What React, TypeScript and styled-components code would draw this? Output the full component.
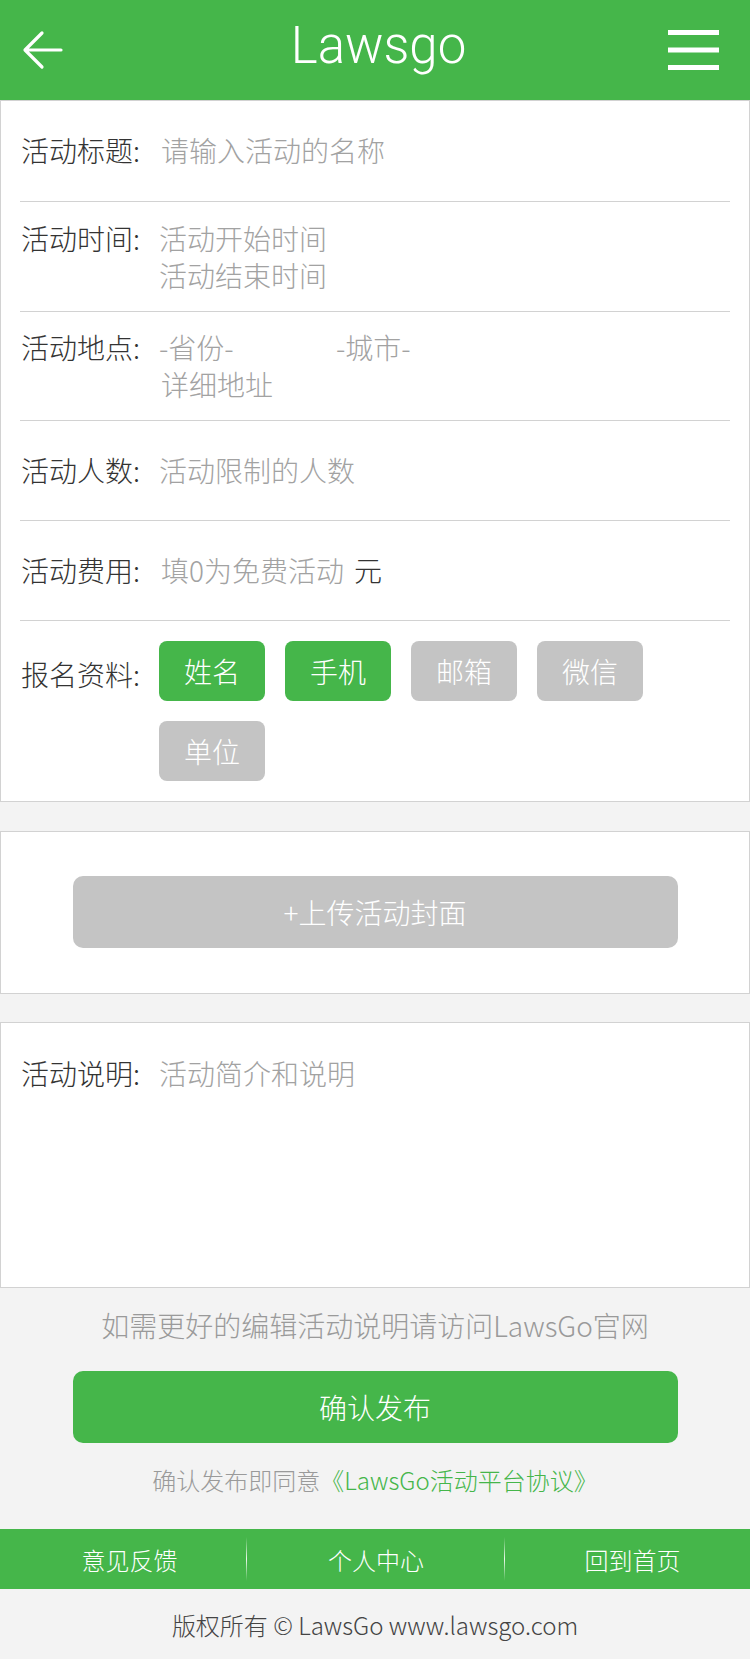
import React from 'react';
import styled, { createGlobalStyle } from 'styled-components';

// palette
const GREEN = '#45b64a';
const GREY_BTN = '#c4c4c4';
const LINE = '#d2d2d2';

const GlobalStyle = createGlobalStyle`
  html, body {
    margin: 0;
    padding: 0;
    background: #f3f3f3;
  }
  body {
    font-family: "Noto Sans CJK SC", "Noto Sans", sans-serif;
    font-weight: 300;
    color: #333;
  }
  * {
    box-sizing: border-box;
  }
`;

const Page = styled.div`
  width: 750px;
  min-height: 1659px;
  background: #f3f3f3;
  display: flex;
  flex-direction: column;
`;

// header bar
const Header = styled.header`
  height: 100px;
  background: ${GREEN};
  display: grid;
  grid-template-columns: 1fr auto 1fr;
  align-items: center;
  padding: 0 31px 0 22px;
`;

const Title = styled.h1`
  margin: 0 0 10px 16px;
  font-family: Roboto, "Liberation Sans", sans-serif;
  font-weight: 300;
  font-size: 51px;
  line-height: 1;
  color: #fff;
`;

const IconButton = styled.span<{ $end?: boolean }>`
  display: flex;
  justify-self: ${(p) => (p.$end ? 'end' : 'start')};
`;

// cards and rows
const Card = styled.section<{ $pad?: string; $minH?: number }>`
  background: #fff;
  border: 1px solid ${LINE};
  padding: ${(p) => p.$pad || '0 19px'};
  min-height: ${(p) => (p.$minH ? `${p.$minH}px` : 'auto')};
`;

const Gap = styled.div<{ $h: number }>`
  height: ${(p) => p.$h}px;
`;

const Row = styled.div<{ $pad: string; $last?: boolean }>`
  display: flex;
  align-items: flex-start;
  padding: ${(p) => p.$pad};
  border-bottom: ${(p) => (p.$last ? 'none' : `1px solid ${LINE}`)};
  font-size: 28px;
  line-height: 37px;
`;

const Label = styled.span`
  width: 139px;
  flex-shrink: 0;
  color: #333;
  padding-left: 1px;
`;

const Value = styled.div`
  display: flex;
  flex-direction: column;
  color: #a2a2a2;
`;

const Line = styled.div<{ $indent?: number }>`
  display: flex;
  padding-left: ${(p) => p.$indent || 0}px;
`;

const Select = styled.span`
  width: 177px;
`;

const Unit = styled.span`
  color: #333;
  margin-left: 10px;
`;

const Tags = styled.div`
  display: flex;
  flex-wrap: wrap;
  gap: 20px;
  margin-top: -15px;
  width: 520px;
`;

const Tag = styled.span<{ $on?: boolean }>`
  width: 106px;
  height: 60px;
  border-radius: 8px;
  background: ${(p) => (p.$on ? GREEN : GREY_BTN)};
  color: #fff;
  font-size: 28px;
  display: flex;
  align-items: center;
  justify-content: center;
`;

const BigButton = styled.button<{ $green?: boolean }>`
  display: block;
  width: 605px;
  height: 72px;
  margin: 0 auto;
  border: none;
  border-radius: 10px;
  background: ${(p) => (p.$green ? GREEN : GREY_BTN)};
  color: #fff;
  font-family: inherit;
  font-weight: 300;
  font-size: 28px;
  cursor: pointer;
`;

const Hint = styled.p`
  margin: 18px 0 0;
  text-align: center;
  font-size: 28px;
  line-height: 38px;
  color: #9a9a9a;
`;

const Agreement = styled.p`
  margin: 20px 0 0;
  text-align: center;
  font-size: 24px;
  line-height: 34px;
  color: #9a9a9a;
`;

const AgreeLink = styled.span`
  color: ${GREEN};
`;

// footer nav
const Nav = styled.nav`
  margin-top: 32px;
  height: 60px;
  background: ${GREEN};
  display: grid;
  grid-template-columns: 247px 258px 1fr;
  align-items: center;
`;

const NavItem = styled.a<{ $divider?: boolean; $shift?: number }>`
  position: relative;
  height: 100%;
  display: flex;
  align-items: center;
  justify-content: center;
  padding-left: ${(p) => p.$shift || 0}px;
  color: #fff;
  font-size: 24px;
  text-decoration: none;

  &::after {
    content: '';
    display: ${(p) => (p.$divider ? 'block' : 'none')};
    position: absolute;
    right: 0;
    top: 8px;
    bottom: 8px;
    width: 1px;
    background: linear-gradient(
      rgba(255, 255, 255, 0),
      rgba(255, 255, 255, 0.9),
      rgba(255, 255, 255, 0)
    );
  }
`;

const Copyright = styled.footer`
  height: 70px;
  display: flex;
  align-items: center;
  justify-content: center;
  font-size: 24px;
  color: #444;
`;

const BackArrow = () => (
  <svg width="42" height="42" viewBox="0 0 42 42" fill="none">
    <path
      d="M39 21H4M20 4L3 21l17 17"
      stroke="#fff"
      strokeWidth="3.2"
      strokeLinecap="round"
      strokeLinejoin="round"
    />
  </svg>
);

const Burger = () => (
  <svg width="51" height="40" viewBox="0 0 51 40">
    <rect x="0" y="0" width="51" height="5" fill="#fff" />
    <rect x="0" y="17.5" width="51" height="5" fill="#fff" />
    <rect x="0" y="35" width="51" height="5" fill="#fff" />
  </svg>
);

const fields = [
  { name: '姓名', on: true },
  { name: '手机', on: true },
  { name: '邮箱', on: false },
  { name: '微信', on: false },
  { name: '单位', on: false },
];

export default function App() {
  return (
    <Page>
      <GlobalStyle />
      <Header>
        <IconButton>
          <BackArrow />
        </IconButton>
        <Title>Lawsgo</Title>
        <IconButton $end>
          <Burger />
        </IconButton>
      </Header>

      <Card>
        <Row $pad="31px 0 32px">
          <Label>活动标题:</Label>
          <Value>
            <Line $indent={2}>请输入活动的名称</Line>
          </Value>
        </Row>
        <Row $pad="18px 0 17px">
          <Label>活动时间:</Label>
          <Value>
            <Line>活动开始时间</Line>
            <Line>活动结束时间</Line>
          </Value>
        </Row>
        <Row $pad="17px 0 17px">
          <Label>活动地点:</Label>
          <Value>
            <Line>
              <Select>-省份-</Select>
              <span>-城市-</span>
            </Line>
            <Line $indent={2}>详细地址</Line>
          </Value>
        </Row>
        <Row $pad="31px 0 31px">
          <Label>活动人数:</Label>
          <Value>活动限制的人数</Value>
        </Row>
        <Row $pad="31px 0 31px">
          <Label>活动费用:</Label>
          <Value>
            <Line $indent={2}>
              填0为免费活动<Unit>元</Unit>
            </Line>
          </Value>
        </Row>
        <Row $pad="35px 0 20px" $last>
          <Label>报名资料:</Label>
          <Tags>
            {fields.map((f) => (
              <Tag key={f.name} $on={f.on}>
                {f.name}
              </Tag>
            ))}
          </Tags>
        </Row>
      </Card>

      <Gap $h={29} />
      <Card $pad="44px 0 45px">
        <BigButton type="button">+上传活动封面</BigButton>
      </Card>

      <Gap $h={28} />
      <Card $pad="32px 19px 0" $minH={266}>
        <Row $pad="0" $last>
          <Label>活动说明:</Label>
          <Value>活动简介和说明</Value>
        </Row>
      </Card>

      <Hint>如需更好的编辑活动说明请访问LawsGo官网</Hint>
      <Gap $h={27} />
      <BigButton type="button" $green>
        确认发布
      </BigButton>
      <Agreement>
        确认发布即同意<AgreeLink>《LawsGo活动平台协议》</AgreeLink>
      </Agreement>

      <Nav>
        <NavItem href="#" $divider $shift={12}>
          意见反馈
        </NavItem>
        <NavItem href="#" $divider>
          个人中心
        </NavItem>
        <NavItem href="#" $shift={10}>
          回到首页
        </NavItem>
      </Nav>
      <Copyright>版权所有 © LawsGo www.lawsgo.com</Copyright>
    </Page>
  );
}
